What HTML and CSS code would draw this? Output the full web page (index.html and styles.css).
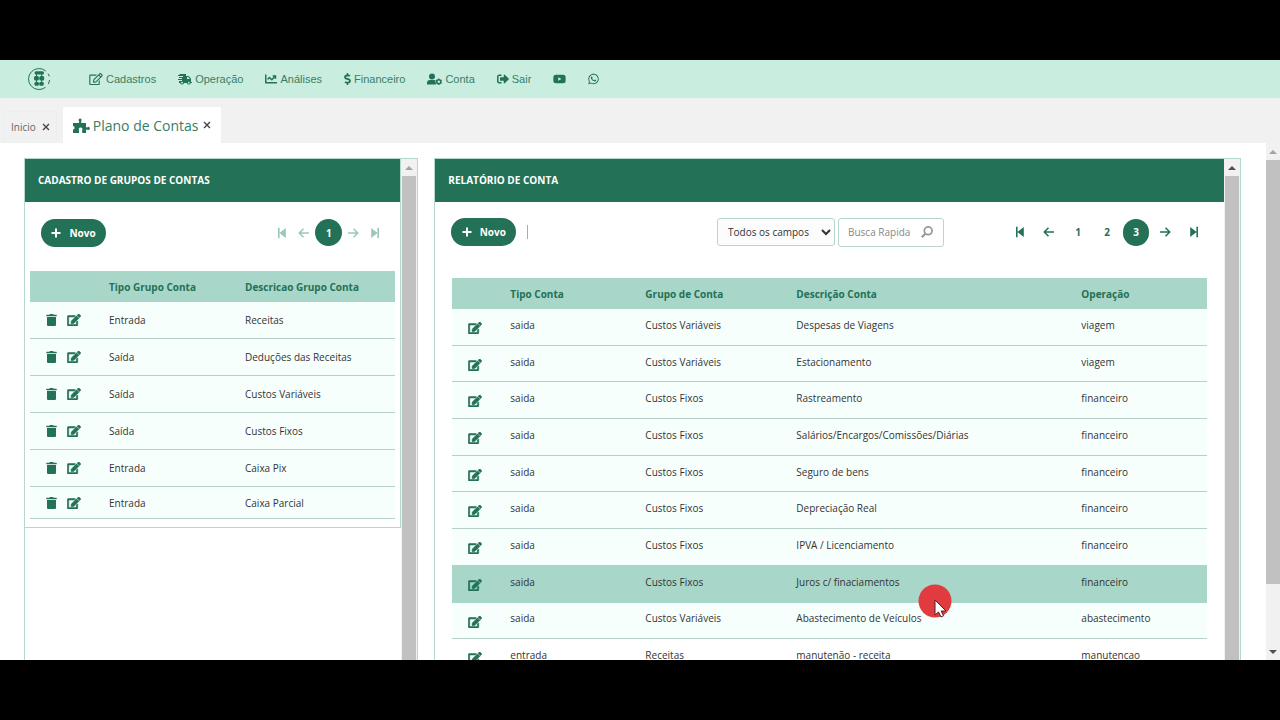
FILE: index.html
```html
<!DOCTYPE html>
<html lang="pt-BR">
<head>
  <meta charset="UTF-8" />
  <meta name="viewport" content="width=device-width, initial-scale=1.0" />
  <title>Plano de Contas</title>
  <link rel="stylesheet" href="styles.css">
</head>
<body>

  <svg class="sprite" aria-hidden="true">
    <symbol id="i-trash" viewBox="0 0 448 512"><path d="M432 32H312l-9.4-18.7A24 24 0 0 0 281.1 0H166.8a23.7 23.7 0 0 0-21.4 13.3L136 32H16A16 16 0 0 0 0 48v32a16 16 0 0 0 16 16h416a16 16 0 0 0 16-16V48a16 16 0 0 0-16-16zM32 128v336a48 48 0 0 0 48 48h288a48 48 0 0 0 48-48V128z"/></symbol>
    <symbol id="i-edit" viewBox="0 0 576 512"><path stroke="currentColor" stroke-width="22" d="M402.6 83.2l90.2 90.2c3.8 3.8 3.8 10 0 13.8L274.4 405.6l-92.8 10.3c-12.4 1.4-22.9-9.1-21.5-21.5l10.3-92.8L388.8 83.2c3.8-3.8 10-3.8 13.8 0zm162-22.9l-48.8-48.8c-15.2-15.2-39.9-15.2-55.2 0l-35.4 35.4c-3.8 3.8-3.8 10 0 13.8l90.2 90.2c3.8 3.8 10 3.8 13.8 0l35.4-35.4c15.2-15.3 15.2-40 0-55.2zM384 346.2V448H64V128h229.8c3.2 0 6.2-1.3 8.5-3.5l40-40c7.6-7.6 2.2-20.5-8.5-20.5H48C21.5 64 0 85.5 0 112v352c0 26.5 21.5 48 48 48h352c26.5 0 48-21.5 48-48V306.2c0-10.7-12.9-16-20.5-8.5l-40 40c-2.2 2.3-3.5 5.3-3.5 8.5z"/></symbol>
    <symbol id="i-first" viewBox="0 0 10 12"><path d="M1 .8h1.600v10.400H1zM8.800 1v10L2.400 6z"/></symbol>
    <symbol id="i-last" viewBox="0 0 10 12"><path d="M7.400.8H9v10.400H7.400zM1.200 1v10L7.600 6z"/></symbol>
    <symbol id="i-prev" viewBox="0 0 12 12"><path d="M11 6H1.500M5.500 1.800L1.300 6l4.200 4.200" fill="none" stroke="currentColor" stroke-width="1.500"/></symbol>
    <symbol id="i-next" viewBox="0 0 12 12"><path d="M1 6h9.500M6.500 1.800L10.700 6l-4.200 4.200" fill="none" stroke="currentColor" stroke-width="1.500"/></symbol>
    <symbol id="i-plus" viewBox="0 0 10 10"><path d="M4 .5h2V4h3.500v2H6v3.500H4V6H.5V4H4z"/></symbol>
    <symbol id="i-close" viewBox="0 0 8 8"><path d="M1 1l6 6M7 1L1 7" fill="none" stroke="currentColor" stroke-width="1.400"/></symbol>
    <symbol id="i-up" viewBox="0 0 8 4"><path d="M4 0l4 4H0z"/></symbol>
    <symbol id="i-down" viewBox="0 0 8 4"><path d="M4 4l4-4H0z"/></symbol>
  </svg>

  <div class="app">
    <nav class="navbar">
      <a class="logo" href="#" aria-label="Inicio">
        <svg viewBox="0 0 24 24" width="24" height="24">
          <path d="M18.800 4A10.500 10.500 0 1 0 18.500 20.300" fill="none" stroke="currentColor" stroke-width="1"/>
          <path d="M21 6.600a10.600 10.600 0 0 1 1.300 2.800M22.500 13a10.600 10.600 0 0 1-1.200 4" fill="none" stroke="currentColor" stroke-width="1"/>
          <rect x="7.500" y="4.300" width="9.500" height="3.200" rx="1.500"/>
          <rect x="7" y="8.900" width="4.900" height="4.600" rx="1.500"/><rect x="12.300" y="8.900" width="4.900" height="4.600" rx="1.500"/>
          <rect x="7.500" y="14.900" width="4.400" height="3.800" rx="1.300"/><rect x="12.300" y="14.900" width="4.400" height="3.800" rx="1.300"/>
          <path d="M9.500 7v2.500M14.700 7v2.500M9.500 13v2.500M14.700 13v2.500" stroke="currentColor" stroke-width="1"/>
        </svg>
      </a>
      <a href="#">
        <svg viewBox="0 0 576 512" width="14" height="12"><path d="M402.3 344.9l32-32c5-5 13.7-1.5 13.700 5.700V464c0 26.500-21.500 48-48 48H48c-26.500 0-48-21.500-48-48V112c0-26.500 21.500-48 48-48h273.500c7.100 0 10.700 8.600 5.700 13.700l-32 32c-1.500 1.500-3.500 2.300-5.700 2.300H48v352h352V350.500c0-2.100.8-4.100 2.300-5.600zm156.600-201.800L296.300 405.700l-90.400 10c-26.200 2.900-48.500-19.200-45.600-45.600l10-90.400L432.900 17.100c22.900-22.900 59.900-22.900 82.700 0l43.200 43.200c22.900 22.900 22.900 60 .1 82.800zM460.100 174L402 115.900 216.200 301.800l-7.300 65.300 65.300-7.300L460.100 174zm64.800-79.700l-43.200-43.200c-4.100-4.100-10.800-4.100-14.800 0L436 82l58.100 58.100 30.900-30.900c4-4.200 4-10.800-.1-14.900z"/></svg>
        Cadastros
      </a>
      <a href="#">
        <svg viewBox="0 0 14 12" width="14" height="12"><path fill-rule="evenodd" d="M1.500 1H8v2h2.600L13 5.500V9h1v1h-1.200a2 2 0 0 1-3.900 0H6a2 2 0 0 1-3.900 0H1V8h3V7H0V6h4V5H1V4h4V3H0V2h1.500zM9 4v2h3L10.200 4zM4 8.800a.9.900 0 1 0 .1 1.800A.9.900 0 0 0 4 8.800zm6.800 0a.9.900 0 1 0 .1 1.800.9.900 0 0 0-.1-1.800z"/></svg>
        Operação
      </a>
      <a href="#">
        <svg viewBox="0 0 512 512" width="12" height="12"><path d="M496 384H64V80c0-8.840-7.160-16-16-16H16C7.160 64 0 71.160 0 80v336c0 17.670 14.330 32 32 32h464c8.840 0 16-7.160 16-16v-32c0-8.840-7.160-16-16-16zM464 96H345.940c-21.380 0-32.090 25.850-16.970 40.970l32.400 32.400L288 242.750l-73.370-73.370c-12.500-12.500-32.760-12.500-45.250 0l-68.690 68.690c-6.250 6.250-6.250 16.380 0 22.630l22.620 22.620c6.250 6.250 16.380 6.250 22.630 0L192 237.250l73.370 73.370c12.500 12.500 32.760 12.500 45.250 0l96-96 32.400 32.400c15.120 15.120 40.970 4.410 40.970-16.970V112c.01-8.840-7.150-16-15.990-16z"/></svg>
        Análises
      </a>
      <a href="#">
        <svg viewBox="0 0 288 512" width="7" height="12"><path d="M209.200 233.400l-108-31.600C88.700 198.200 80 186.500 80 173.500c0-16.300 13.200-29.500 29.500-29.500h66.300c12.200 0 24.200 3.700 34.200 10.500 6.100 4.100 14.300 3.100 19.500-2l34.800-34c7.100-6.900 6.100-18.400-1.800-24.500C238 74.800 207.400 64.100 176 64V16c0-8.800-7.200-16-16-16h-32c-8.800 0-16 7.200-16 16v48h-2.500C45.800 64-5.400 118.700.5 183.600c4.200 46.100 39.400 83.600 83.800 96.600l102.500 30c12.500 3.700 21.200 15.300 21.200 28.300 0 16.300-13.200 29.500-29.500 29.500h-66.300C100 368 88 364.300 78 357.500c-6.100-4.100-14.300-3.100-19.500 2l-34.800 34c-7.100 6.900-6.100 18.400 1.800 24.500 24.500 19.200 55.100 29.900 86.500 30v48c0 8.800 7.200 16 16 16h32c8.800 0 16-7.200 16-16v-48.200c46.600-.9 90.300-28.600 105.700-72.700 21.500-61.600-14.600-124.800-72.500-141.700z"/></svg>
        Financeiro
      </a>
      <a href="#">
        <svg viewBox="0 0 15 12" width="15" height="12"><circle cx="5" cy="3.500" r="3"/><path d="M0 11.500V10a3 3 0 0 1 3-3h4a3 3 0 0 1 1.600.5V9.500l.5 2z"/><circle cx="11.800" cy="8.700" r="2" fill="none" stroke="currentColor" stroke-width="1.500"/><path d="M11.800 5.500v1.300M11.800 10.600v1.300M9 7.100l1.100.6M13.500 9.700l1.100.6M14.600 7.100l-1.100.6M10.100 9.700l-1.100.6" stroke="currentColor" stroke-width="1.200"/></svg>
        Conta
      </a>
      <a href="#">
        <svg viewBox="0 0 512 512" width="12" height="12"><path d="M497 273L329 441c-15 15-41 4.500-41-17v-96H152c-13.300 0-24-10.700-24-24v-96c0-13.300 10.700-24 24-24h136V88c0-21.400 25.900-32 41-17l168 168c9.300 9.400 9.300 24.600 0 34zM192 436v-40c0-6.600-5.400-12-12-12H96c-17.700 0-32-14.300-32-32V160c0-17.700 14.300-32 32-32h84c6.600 0 12-5.400 12-12V76c0-6.600-5.400-12-12-12H96c-53 0-96 43-96 96v192c0 53 43 96 96 96h84c6.600 0 12-5.400 12-12z"/></svg>
        Sair
      </a>
      <a href="#" aria-label="YouTube">
        <svg viewBox="0 0 576 512" width="13" height="12"><path d="M549.700 124.100c-6.300-23.700-24.800-42.300-48.300-48.600C458.800 64 288 64 288 64S117.200 64 74.600 75.500c-23.500 6.300-42 24.900-48.300 48.600-11.400 42.900-11.400 132.300-11.400 132.300s0 89.400 11.400 132.300c6.300 23.700 24.800 41.500 48.300 47.800C117.200 448 288 448 288 448s170.800 0 213.400-11.500c23.500-6.300 42-24.200 48.300-47.800 11.400-42.900 11.400-132.300 11.400-132.300s0-89.400-11.400-132.300zm-317.500 213.500V175.200l142.700 81.200-142.700 81.200z"/></svg>
      </a>
      <a href="#" aria-label="WhatsApp">
        <svg viewBox="0 0 448 512" width="11" height="12"><path d="M380.900 97.100C339 55.100 283.200 32 223.900 32c-122.400 0-222 99.600-222 222 0 39.100 10.200 77.300 29.600 111L0 480l117.700-30.900c32.400 17.700 68.900 27 106.100 27h.1c122.300 0 224.100-99.600 224.100-222 0-59.300-25.200-115-67.100-157zm-157 341.600c-33.200 0-65.700-8.900-94-25.700l-6.700-4-69.800 18.300L72 359.200l-4.400-7c-18.500-29.400-28.200-63.300-28.200-98.200 0-101.700 82.800-184.500 184.600-184.500 49.300 0 95.600 19.200 130.400 54.100 34.800 34.900 56.200 81.200 56.100 130.500 0 101.800-84.900 184.600-186.600 184.600zm101.200-138.200c-5.500-2.800-32.800-16.200-37.900-18-5.100-1.900-8.800-2.800-12.500 2.800-3.700 5.600-14.300 18-17.600 21.800-3.200 3.700-6.500 4.200-12 1.400-32.600-16.300-54-29.100-75.500-66-5.700-9.800 5.700-9.100 16.300-30.300 1.800-3.700.9-6.900-.5-9.700-1.400-2.800-12.500-30.100-17.100-41.200-4.500-10.800-9.100-9.300-12.500-9.500-3.200-.2-6.900-.2-10.600-.2-3.700 0-9.700 1.400-14.800 6.900-5.100 5.600-19.400 19-19.400 46.300 0 27.300 19.900 53.700 22.600 57.400 2.800 3.700 39.100 59.700 94.800 83.800 35.200 15.200 49 16.500 66.600 13.900 10.700-1.600 32.800-13.400 37.400-26.400 4.600-13 4.600-24.100 3.200-26.400-1.300-2.500-5-3.900-10.500-6.600z"/></svg>
      </a>
    </nav>

    <div class="tabs">
      <div class="tab">
        <a href="#">Inicio</a>
        <button type="button" aria-label="Fechar Inicio"><svg width="8" height="8"><use href="#i-close"/></svg></button>
      </div>
      <div class="tab tab_ativa">
        <a href="#">
          <svg viewBox="0 0 17 15" width="17" height="15"><path d="M0 5h5.500l.8-1-.5-1.200a1.500 1.500 0 1 1 2.600 0L7.900 4l.8 1H13v4.200l1.200.3a1.500 1.500 0 1 1 0 1.900l-1.200.3V15H9.200v-2.700l.3-1.400a2 2 0 0 0-3.800 0l.3 1.400V15H0v-3.500l1.400-.6V8.600L0 8z"/></svg>
          Plano de Contas
        </a>
        <button type="button" aria-label="Fechar Plano de Contas"><svg width="8" height="8"><use href="#i-close"/></svg></button>
      </div>
    </div>

    <div class="pagina">
      <main class="conteudo">
        <section class="painel grupos">
          <div class="painel_corpo">
            <h2>CADASTRO DE GRUPOS DE CONTAS</h2>
            <div class="ferramentas">
              <button type="button" class="novo"><svg width="10" height="10"><use href="#i-plus"/></svg>Novo</button>
              <div class="paginacao inativa">
                <button type="button" aria-label="Primeira"><svg width="10" height="12"><use href="#i-first"/></svg></button>
                <button type="button" aria-label="Anterior"><svg width="12" height="12"><use href="#i-prev"/></svg></button>
                <button type="button" class="atual">1</button>
                <button type="button" aria-label="Próxima"><svg width="12" height="12"><use href="#i-next"/></svg></button>
                <button type="button" aria-label="Última"><svg width="10" height="12"><use href="#i-last"/></svg></button>
              </div>
            </div>
            <table>
              <thead>
                <tr><th class="acoes"></th><th class="tipo">Tipo Grupo Conta</th><th>Descricao Grupo Conta</th></tr>
              </thead>
              <tbody>
                <tr><td><button type="button" aria-label="Excluir"><svg width="11" height="12"><use href="#i-trash"/></svg></button><button type="button" aria-label="Editar"><svg width="14" height="12"><use href="#i-edit"/></svg></button></td><td>Entrada</td><td>Receitas</td></tr>
                <tr><td><button type="button" aria-label="Excluir"><svg width="11" height="12"><use href="#i-trash"/></svg></button><button type="button" aria-label="Editar"><svg width="14" height="12"><use href="#i-edit"/></svg></button></td><td>Saída</td><td>Deduções das Receitas</td></tr>
                <tr><td><button type="button" aria-label="Excluir"><svg width="11" height="12"><use href="#i-trash"/></svg></button><button type="button" aria-label="Editar"><svg width="14" height="12"><use href="#i-edit"/></svg></button></td><td>Saída</td><td>Custos Variáveis</td></tr>
                <tr><td><button type="button" aria-label="Excluir"><svg width="11" height="12"><use href="#i-trash"/></svg></button><button type="button" aria-label="Editar"><svg width="14" height="12"><use href="#i-edit"/></svg></button></td><td>Saída</td><td>Custos Fixos</td></tr>
                <tr><td><button type="button" aria-label="Excluir"><svg width="11" height="12"><use href="#i-trash"/></svg></button><button type="button" aria-label="Editar"><svg width="14" height="12"><use href="#i-edit"/></svg></button></td><td>Entrada</td><td>Caixa Pix</td></tr>
                <tr><td><button type="button" aria-label="Excluir"><svg width="11" height="12"><use href="#i-trash"/></svg></button><button type="button" aria-label="Editar"><svg width="14" height="12"><use href="#i-edit"/></svg></button></td><td>Entrada</td><td>Caixa Parcial</td></tr>
              </tbody>
            </table>
          </div>
          <div class="rolagem">
            <span class="seta seta_clara"><svg width="8" height="4"><use href="#i-up"/></svg></span>
            <span class="barra"></span>
          </div>
        </section>

        <section class="painel contas">
          <div class="painel_corpo">
            <h2>RELATÓRIO DE CONTA</h2>
            <div class="ferramentas">
              <button type="button" class="novo"><svg width="10" height="10"><use href="#i-plus"/></svg>Novo</button>
              <span class="divisor"></span>
              <form class="busca">
                <select aria-label="Campo da busca">
                  <option>Todos os campos</option>
                </select>
                <label class="busca_campo">
                  <input type="text" placeholder="Busca Rapida" aria-label="Busca Rapida" />
                  <svg viewBox="0 0 12 12" width="12" height="12"><circle cx="7.200" cy="4.800" r="3.900" fill="none" stroke="currentColor" stroke-width="1.800"/><path d="M4.300 7.700L.8 11.200" stroke="currentColor" stroke-width="2.200"/></svg>
                </label>
              </form>
              <div class="paginacao">
                <button type="button" aria-label="Primeira"><svg width="10" height="12"><use href="#i-first"/></svg></button>
                <button type="button" aria-label="Anterior"><svg width="12" height="12"><use href="#i-prev"/></svg></button>
                <button type="button">1</button>
                <button type="button">2</button>
                <button type="button" class="atual">3</button>
                <button type="button" aria-label="Próxima"><svg width="12" height="12"><use href="#i-next"/></svg></button>
                <button type="button" aria-label="Última"><svg width="10" height="12"><use href="#i-last"/></svg></button>
              </div>
            </div>
            <table>
              <thead>
                <tr><th class="acoes"></th><th class="tipo">Tipo Conta</th><th class="grupo">Grupo de Conta</th><th class="descricao">Descrição Conta</th><th>Operação</th></tr>
              </thead>
              <tbody>
                <tr><td><button type="button" aria-label="Editar"><svg width="14" height="12"><use href="#i-edit"/></svg></button></td><td>saida</td><td>Custos Variáveis</td><td>Despesas de Viagens</td><td>viagem</td></tr>
                <tr><td><button type="button" aria-label="Editar"><svg width="14" height="12"><use href="#i-edit"/></svg></button></td><td>saida</td><td>Custos Variáveis</td><td>Estacionamento</td><td>viagem</td></tr>
                <tr><td><button type="button" aria-label="Editar"><svg width="14" height="12"><use href="#i-edit"/></svg></button></td><td>saida</td><td>Custos Fixos</td><td>Rastreamento</td><td>financeiro</td></tr>
                <tr><td><button type="button" aria-label="Editar"><svg width="14" height="12"><use href="#i-edit"/></svg></button></td><td>saida</td><td>Custos Fixos</td><td>Salários/Encargos/Comissões/Diárias</td><td>financeiro</td></tr>
                <tr><td><button type="button" aria-label="Editar"><svg width="14" height="12"><use href="#i-edit"/></svg></button></td><td>saida</td><td>Custos Fixos</td><td>Seguro de bens</td><td>financeiro</td></tr>
                <tr><td><button type="button" aria-label="Editar"><svg width="14" height="12"><use href="#i-edit"/></svg></button></td><td>saida</td><td>Custos Fixos</td><td>Depreciação Real</td><td>financeiro</td></tr>
                <tr><td><button type="button" aria-label="Editar"><svg width="14" height="12"><use href="#i-edit"/></svg></button></td><td>saida</td><td>Custos Fixos</td><td>IPVA / Licenciamento</td><td>financeiro</td></tr>
                <tr class="selecionada"><td><button type="button" aria-label="Editar"><svg width="14" height="12"><use href="#i-edit"/></svg></button></td><td>saida</td><td>Custos Fixos</td><td>Juros c/ finaciamentos</td><td>financeiro</td></tr>
                <tr><td><button type="button" aria-label="Editar"><svg width="14" height="12"><use href="#i-edit"/></svg></button></td><td>saida</td><td>Custos Variáveis</td><td>Abastecimento de Veículos</td><td>abastecimento</td></tr>
                <tr class="clara"><td><button type="button" aria-label="Editar"><svg width="14" height="12"><use href="#i-edit"/></svg></button></td><td>entrada</td><td>Receitas</td><td>manutenão - receita</td><td>manutencao</td></tr>
              </tbody>
            </table>
          </div>
          <div class="rolagem">
            <span class="seta"><svg width="8" height="4"><use href="#i-up"/></svg></span>
            <span class="barra"></span>
          </div>
        </section>
      </main>

      <div class="rolagem rolagem_pagina">
        <span class="seta seta_clara"><svg width="8" height="4"><use href="#i-up"/></svg></span>
        <span class="barra"></span>
        <span class="seta"><svg width="8" height="4"><use href="#i-down"/></svg></span>
      </div>
    </div>

    <div class="ponteiro">
      <svg viewBox="0 0 34 34" width="34" height="34">
        <circle cx="17" cy="17" r="16.500" fill="#e23b3f"/>
        <path d="M17 16v15l3.500-3 2.500 5 2.500-1.200-2.300-4.800H28z" fill="#fff" stroke="#4a2020" stroke-width="1"/>
      </svg>
    </div>
  </div>

</body>
</html>
```

FILE: styles.css
```css
* {
  box-sizing: border-box;
}

body {
  margin: 0;
  height: 100vh;
  padding: 60px 0;
  background-color: #000;
  color: #333;
  font-family: "Segoe UI", "Open Sans", "Noto Sans", sans-serif;
  font-size: 10px;
  overflow: hidden;
}

svg {
  display: block;
  flex: none;
  fill: currentColor;
  overflow: visible;
}

button {
  display: flex;
  align-items: center;
  justify-content: center;
  padding: 0;
  border: none;
  background: none;
  color: #237156;
  font: inherit;
  cursor: pointer;
}

a {
  color: inherit;
  text-decoration: none;
}

.sprite {
  position: absolute;
  width: 0;
  height: 0;
}

.app {
  position: relative;
  display: flex;
  flex-direction: column;
  height: 100%;
  background-color: #fff;
  overflow: hidden;
}

/* menu */
.navbar {
  display: flex;
  align-items: center;
  flex: none;
  gap: 22px;
  height: 38px;
  padding-left: 27px;
  background-color: #c9eee0;
  color: #3a7d66;
  font-family: "Liberation Sans", Arial, sans-serif;
  font-size: 11px;
}

.navbar a {
  display: flex;
  align-items: center;
  gap: 3px;
}

.navbar svg {
  color: #237156;
}

.navbar .logo {
  margin-right: 16px;
}

/* abas */
.tabs {
  display: flex;
  align-items: flex-end;
  flex: none;
  gap: 6px;
  height: 45px;
  padding-left: 3px;
  background-color: #f1f1f1;
}

.tab {
  display: flex;
  align-items: center;
  gap: 6px;
  height: 32px;
  padding: 0 6px 0 7px;
  border: 1px solid #ebf0ee;
  color: #666;
}

.tab button {
  color: #444;
}

.tab_ativa {
  gap: 4px;
  height: 36px;
  padding: 0 9px;
  border: 1px solid #fff;
  background-color: #fff;
  color: #3a7d66;
  font-size: 14px;
}

.tab_ativa svg {
  color: #237156;
}

.tab_ativa a {
  display: flex;
  align-items: center;
  gap: 3px;
}

.tab_ativa button svg {
  color: #444;
}

/* pagina */
.pagina {
  display: flex;
  flex: 1;
  min-height: 0;
}

.conteudo {
  display: flex;
  flex: 1;
  gap: 16px;
  min-width: 0;
  padding: 15px 25px 0 24px;
}

.painel {
  display: flex;
  min-width: 0;
  border: 1px solid #b5d8cc;
  border-bottom: none;
  overflow: hidden;
}

.grupos {
  flex: 393;
}

.contas {
  flex: 806;
}

.painel_corpo {
  flex: 1;
  min-width: 0;
}

.painel h2 {
  margin: 0;
  height: 43px;
  padding: 0 13px;
  background-color: #237156;
  color: #fff;
  font-size: 10px;
  line-height: 42px;
}

.ferramentas {
  display: flex;
  align-items: center;
}

.novo {
  gap: 8px;
  width: 65px;
  height: 28px;
  border-radius: 14px;
  background-color: #237156;
  color: #fff;
  font-weight: bold;
}

.paginacao {
  display: flex;
  align-items: center;
  gap: 3px;
  margin-left: auto;
}

.paginacao button {
  width: 26px;
  height: 27px;
  font-weight: bold;
}

.paginacao .atual {
  border-radius: 14px;
  background-color: #237156;
  color: #fff;
}

.inativa {
  gap: 0;
}

.inativa button {
  width: 22px;
  color: #9cc7b8;
}

.inativa .atual {
  width: 27px;
}

/* tabelas */
table {
  border-collapse: separate;
  border-spacing: 0;
  table-layout: fixed;
}

th {
  height: 31px;
  padding: 0;
  background-color: #a8d6c8;
  color: #237156;
  text-align: left;
}

td {
  padding: 0;
  border-bottom: 1px solid #b5d0c8;
  background-color: #f7fffd;
}

td button {
  display: inline-flex;
  vertical-align: middle;
}

/* grupos de contas */
.grupos .painel_corpo {
  align-self: flex-start;
  padding-bottom: 8px;
  border-right: 1px solid #b5d8cc;
  border-bottom: 1px solid #b5d8cc;
}

.grupos .ferramentas {
  height: 69px;
  padding: 0 14px 8px 16px;
}

.grupos table {
  width: calc(100% - 10px);
  margin: 0 5px;
}

.grupos .acoes {
  width: 79px;
}

.grupos .tipo {
  width: 136px;
}

.grupos td {
  height: 37px;
}

.grupos tr:last-child td {
  height: 32px;
}

.grupos td:first-child {
  padding: 0 0 2px 16px;
}

.grupos td button + button {
  margin-left: 10px;
}

/* relatorio */
.contas .ferramentas {
  height: 76px;
  padding: 0 17px 16px 16px;
}

.contas table {
  width: calc(100% - 34px);
  height: 398px;
  margin: 0 17px;
}

.contas .acoes {
  width: 58px;
}

.contas .tipo {
  width: 135px;
}

.contas .grupo {
  width: 151px;
}

.contas .descricao {
  width: 285px;
}

.contas td {
  padding-bottom: 4px;
}

.contas td:first-child {
  padding: 0 0 0 16px;
}

.contas .selecionada td {
  background-color: #a8d6c8;
  border-color: #a8d6c8;
}

.contas .clara td {
  background-color: #fff;
}

.divisor {
  width: 1px;
  height: 14px;
  margin-left: 11px;
  background-color: #aaa;
}

.busca {
  display: flex;
  gap: 3px;
  margin-left: auto;
}

.busca select {
  width: 118px;
  height: 28px;
  padding: 0 0 0 6px;
  border: 1px solid #b9d6cc;
  border-radius: 3px;
  background-color: #fcfcfc;
  color: #333;
  font: inherit;
}

.busca_campo {
  display: flex;
  align-items: center;
  width: 106px;
  height: 29px;
  padding: 0 10px 0 9px;
  border: 1px solid #b9d6cc;
  border-radius: 3px;
  background-color: #fff;
  color: #999;
}

.busca_campo input {
  flex: 1;
  min-width: 0;
  padding: 0;
  border: none;
  outline: none;
  background: none;
  font: inherit;
}

.busca_campo input::placeholder {
  color: #888;
}

.contas .paginacao {
  margin-left: 63px;
}

/* barras de rolagem */
.rolagem {
  display: flex;
  flex-direction: column;
  flex: none;
  width: 16px;
  background-color: #f1f1f1;
}

.seta {
  display: flex;
  align-items: center;
  justify-content: center;
  flex: none;
  height: 17px;
  color: #505050;
}

.seta_clara {
  color: #a3a3a3;
}

.barra {
  flex: 1;
  margin: 0 1px;
  background-color: #c1c1c1;
}

.rolagem_pagina {
  width: 14px;
}

.rolagem_pagina .barra {
  flex: none;
  height: 82%;
  margin: 0 0 auto;
}

/* cursor */
.ponteiro {
  position: absolute;
  left: 918px;
  top: 524px;
  pointer-events: none;
}
```
